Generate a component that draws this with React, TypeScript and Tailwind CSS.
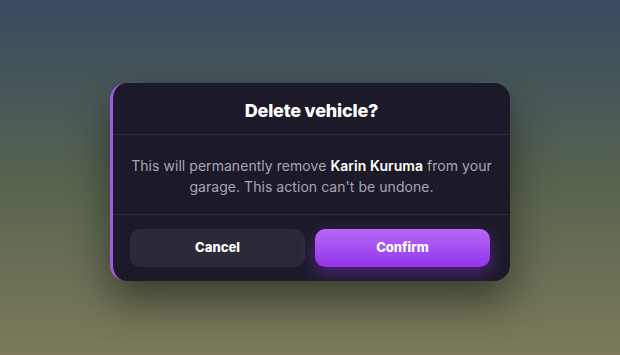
export default function App() {
  return (
    <div
      className="w-[620px] h-[355px] flex items-center justify-center pt-[8px] bg-gradient-to-b from-[#3b4a5f] via-[#56634f] to-[#7c7a5a]"
      style={{ fontFamily: "Inter, 'Noto Sans', sans-serif" }}
    >
      <div className="w-[400px] rounded-2xl border-l-[3px] border-[#9b5de5] bg-[#1c1a28] shadow-[0_20px_40px_rgba(0,0,0,0.45)] overflow-hidden">
        <div className="h-[52px] flex items-center justify-center pt-[4px] border-b border-[#2f2d3b]">
          <h2 className="text-[18px] font-extrabold text-white tracking-[-0.01em]">Delete vehicle?</h2>
        </div>
        <div className="h-[80px] flex items-center justify-center px-3 pt-[3px] border-b border-[#2f2d3b]">
          <p className="text-center text-[14px] leading-[21px] tracking-[0.05px] text-[#a8a6b2]">
            This will permanently remove <span className="font-semibold text-white">Karin Kuruma</span> from your garage. This action can't be undone.
          </p>
        </div>
        <div className="flex gap-[10px] pr-5 pt-[14px] pb-[14px] pl-[17px]">
          <button className="flex-1 h-[38px] rounded-[10px] bg-[#2c2a36] text-white text-[13px] font-extrabold">
            Cancel
          </button>
          <button className="flex-1 h-[38px] rounded-[10px] bg-gradient-to-b from-[#b865f7] to-[#9333ea] text-white text-[13px] font-extrabold shadow-[0_6px_18px_rgba(147,51,234,0.45)]">
            Confirm
          </button>
        </div>
      </div>
    </div>
  );
}
